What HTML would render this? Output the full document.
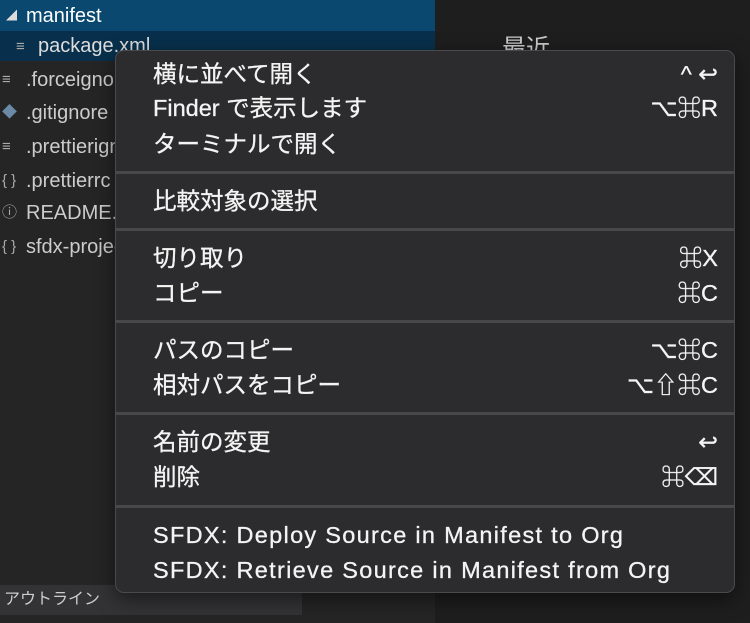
<!DOCTYPE html>
<html><head><meta charset="utf-8"><style>
*{margin:0;padding:0;box-sizing:border-box}
body{width:750px;height:623px;overflow:hidden;background:#1e1e1e;position:relative;font-family:"Liberation Sans","Noto Sans CJK JP",sans-serif;color:#ccc}
.side{position:absolute;left:0;top:0;width:435px;height:623px;background:#252526}
.row{position:absolute;left:0;width:435px;height:32px;font-size:20px;line-height:32px;color:#ccc;white-space:nowrap}
.ic{position:absolute;left:2px;font-size:15px;color:#aaa}
.menu{position:absolute;left:115px;top:50px;width:620px;height:543px;background:#2c2c2e;border:1px solid #4a4a4c;border-radius:9px;box-shadow:0 6px 20px rgba(0,0,0,.5)}
.it{position:absolute;left:37px;right:16px;height:34px;font-size:23.5px;line-height:34px;color:#f4f4f4;white-space:nowrap;-webkit-text-stroke:0.3px #f4f4f4}
.it span{position:absolute;right:0;top:0}
.sep{position:absolute;left:0;right:0;height:3px;background:#48484a}
</style></head><body>
<div class="side">
<div class="row" style="top:0;height:31px;background:#0b4870;color:#fff"><span class="ic" style="left:6px;font-size:11px;color:#ddd">◢</span><span style="position:absolute;left:26px">manifest</span></div>
<div class="row" style="top:31px;height:30px;background:#08304c;color:#ddd"><span class="ic" style="left:16px">≡</span><span style="position:absolute;left:38px;line-height:30px">package.xml</span></div>
<div class="row" style="top:64px"><span class="ic">≡</span><span style="position:absolute;left:26px">.forceignore</span></div>
<div class="row" style="top:97px"><span class="ic" style="color:#6b8aa8">◆</span><span style="position:absolute;left:26px">.gitignore</span></div>
<div class="row" style="top:131px"><span class="ic">≡</span><span style="position:absolute;left:26px">.prettierignore</span></div>
<div class="row" style="top:165px"><span class="ic">{ }</span><span style="position:absolute;left:26px">.prettierrc</span></div>
<div class="row" style="top:197px"><span class="ic">ⓘ</span><span style="position:absolute;left:26px">README.md</span></div>
<div class="row" style="top:231px"><span class="ic">{ }</span><span style="position:absolute;left:26px">sfdx-project.json</span></div>
<div class="row" style="top:585px;height:30px;width:302px;background:#333335;font-size:16px;line-height:30px"><span style="position:absolute;left:4px">アウトライン</span></div>
</div>
<div style="position:absolute;left:502px;top:28px;font-size:24px;color:#ccc;font-family:'Noto Sans CJK JP',sans-serif">最近</div>
<div class="menu">
<div class="it" style="top:6px">横に並べて開く<span>^ ↩</span></div>
<div class="it" style="top:40px">Finder で表示します<span>⌥⌘R</span></div>
<div class="it" style="top:76px">ターミナルで開く</div>
<div class="sep" style="top:120px"></div>
<div class="it" style="top:133px">比較対象の選択</div>
<div class="sep" style="top:177px"></div>
<div class="it" style="top:190px">切り取り<span>⌘X</span></div>
<div class="it" style="top:225px">コピー<span>⌘C</span></div>
<div class="sep" style="top:269px"></div>
<div class="it" style="top:282px">パスのコピー<span>⌥⌘C</span></div>
<div class="it" style="top:317px">相対パスをコピー<span>⌥⇧⌘C</span></div>
<div class="sep" style="top:361px"></div>
<div class="it" style="top:374px">名前の変更<span>↩</span></div>
<div class="it" style="top:409px">削除<span>⌘⌫</span></div>
<div class="sep" style="top:454px"></div>
<div class="it" style="top:467px;letter-spacing:1.3px">SFDX: Deploy Source in Manifest to Org</div>
<div class="it" style="top:502px;letter-spacing:1.3px">SFDX: Retrieve Source in Manifest from Org</div>
</div>
</body></html>
